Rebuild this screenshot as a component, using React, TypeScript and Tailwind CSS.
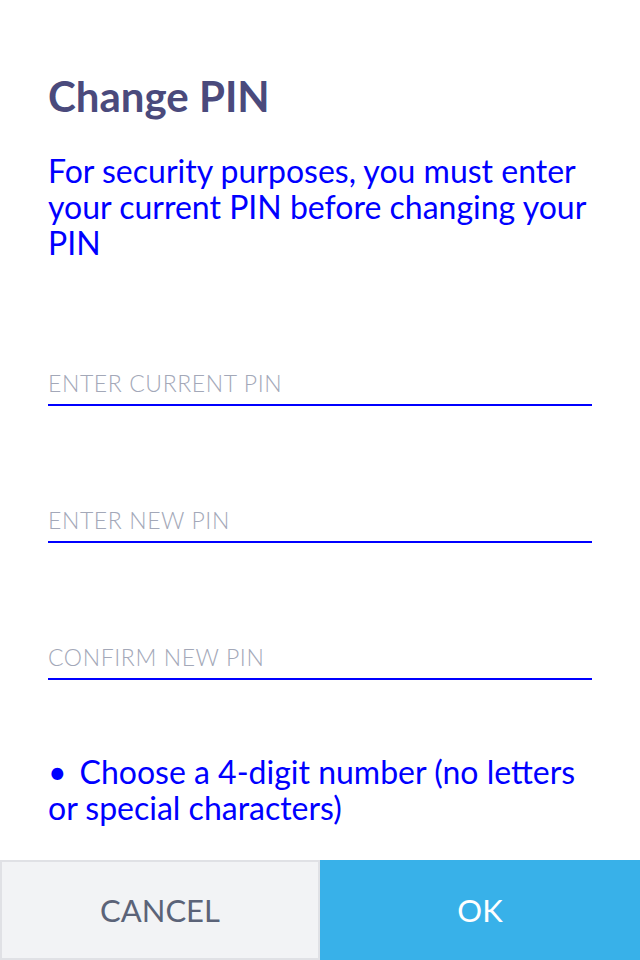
export default function App() {
  const fields = ["ENTER CURRENT PIN", "ENTER NEW PIN", "CONFIRM NEW PIN"];
  return (
    <div className="flex h-[960px] w-[640px] flex-col bg-white font-['Lato',sans-serif]">
      <div className="flex-1 px-12">
        <h1 className="pt-[71px] text-[42px] font-bold leading-[50px] text-[#4a4a7c]">
          Change PIN
        </h1>
        <p className="mt-[32px] text-[32px] leading-[36px] text-[#0000ff]">
          For security purposes, you must enter your current PIN before changing your PIN
        </p>
        <div className="mt-[110px] flex flex-col gap-[102px]">
          {fields.map((f) => (
            <div key={f} className="border-b-2 border-[#0000ff] pb-[6px]">
              <span className="text-[23px] font-light leading-[24px] tracking-[0.6px] text-[#a3a8b8]">
                {f}
              </span>
            </div>
          ))}
        </div>
        <p className="mt-[74px] text-[32px] leading-[36px] text-[#0000ff]">
          <span className="mr-[13px]">•</span>Choose a 4-digit number (no letters or special characters)
        </p>
      </div>
      <div className="flex h-[100px]">
        <button className="w-[320px] border-2 border-[#e0e1e5] bg-[#f2f3f5] text-[31px] text-[#5b6378]">
          CANCEL
        </button>
        <button className="w-[320px] bg-[#38b1e9] text-[31px] text-white">OK</button>
      </div>
    </div>
  );
}
